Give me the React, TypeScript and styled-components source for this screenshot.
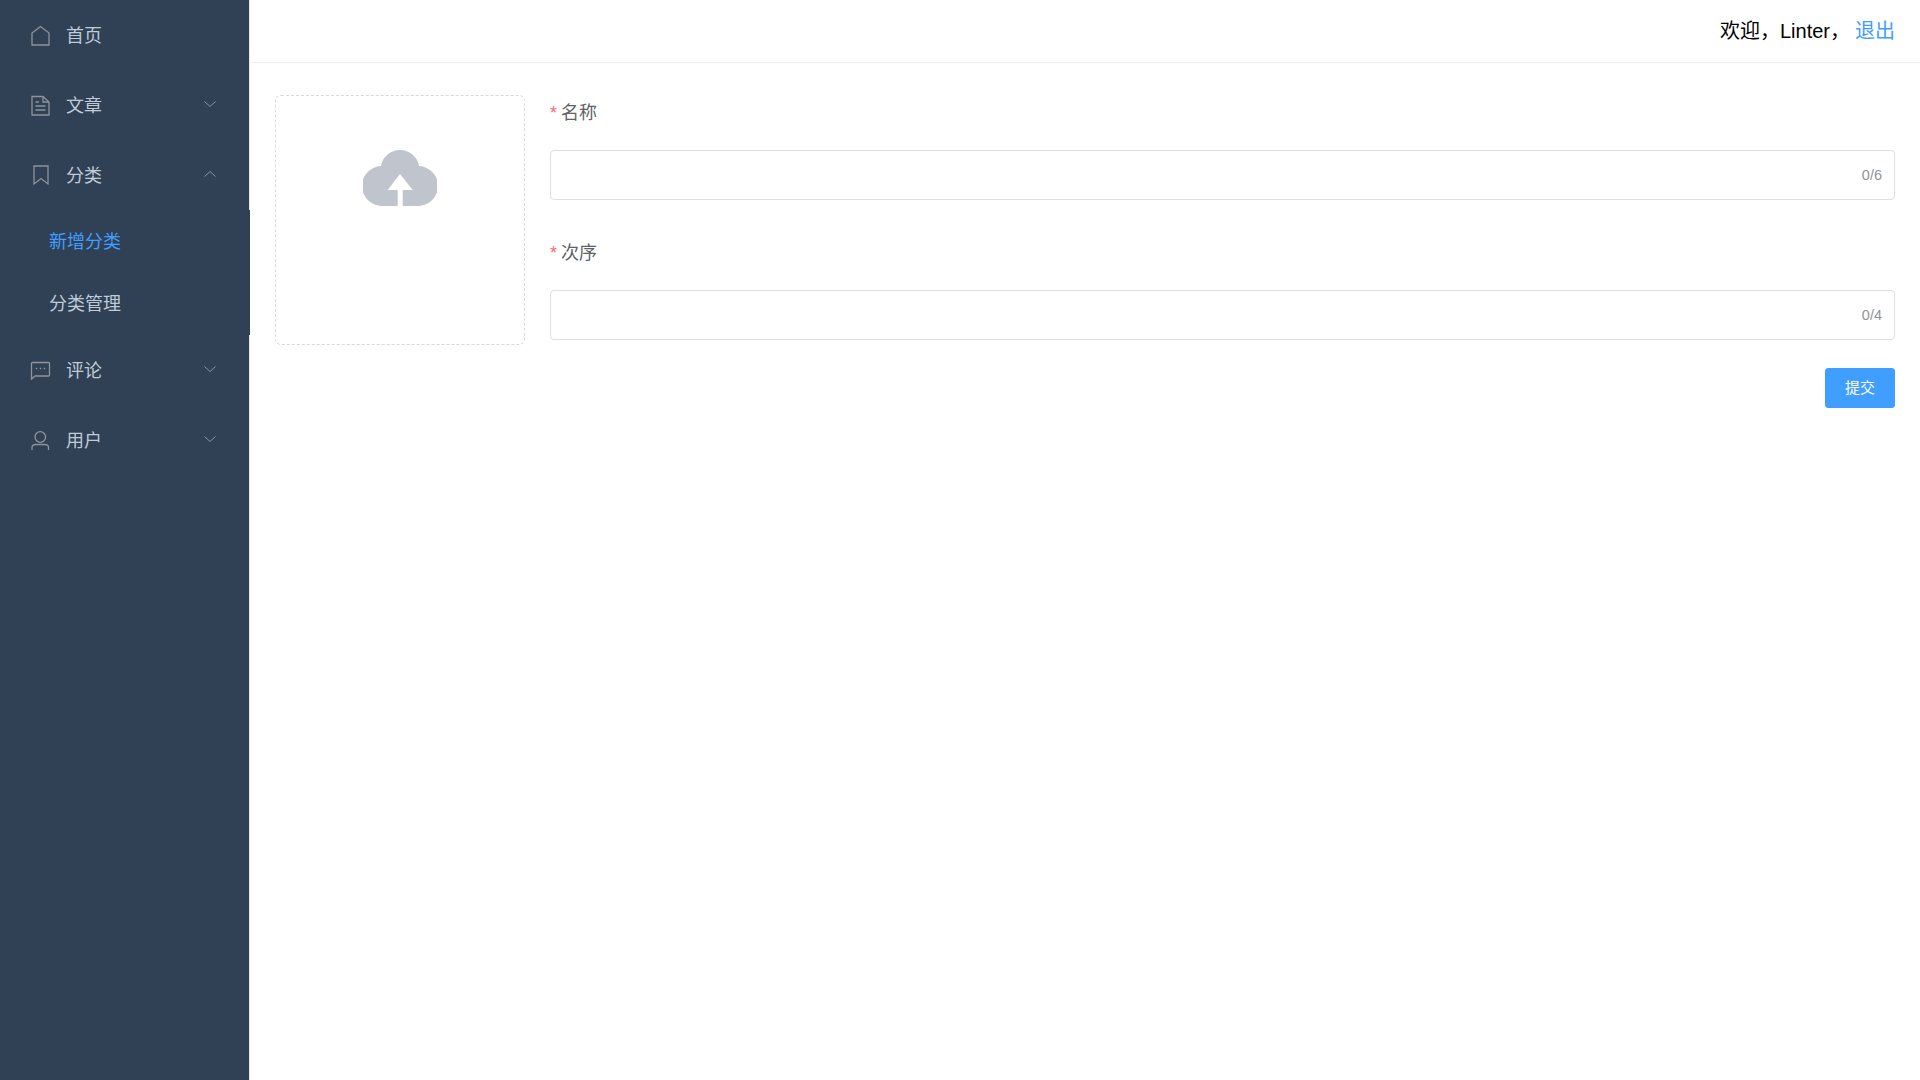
import React from 'react';
import styled, { createGlobalStyle } from 'styled-components';

const GlobalStyle = createGlobalStyle`
  html, body {
    margin: 0;
    height: 100%;
    background: #fff;
    font-family: "Liberation Sans", "Noto Sans CJK SC", sans-serif;
  }
  #root { height: 100%; }
  * { box-sizing: border-box; }
`;

const Layout = styled.div`
  display: flex;
  height: 100vh;
  overflow: hidden;
`;

const Sidebar = styled.aside`
  width: 250px;
  flex: none;
  background: #304156;
  border-right: 1px solid #e6e6e6;
`;

const MenuItem = styled.div`
  height: 70px;
  padding: 0 33px 2px 30px;
  display: flex;
  align-items: center;
  font-size: 18px;
  color: #bfcbd9;
`;

const MenuIcon = styled.svg`
  width: 20px;
  height: 20px;
  margin: 4px 16px 0 0;
  flex: none;
  overflow: visible;
  fill: none;
  stroke: #909399;
  stroke-width: 1.3;
`;

const MenuLabel = styled.span`
  flex: 1;
`;

const Arrow = styled.svg`
  width: 12px;
  height: 12px;
  fill: none;
  stroke: #909399;
  stroke-width: 1;
`;

// the open submenu covers the sidebar's right border
const SubMenu = styled.div`
  margin-right: -1px;
  background: #304156;
  position: relative;
`;

const SubItem = styled.div<{ $active?: boolean }>`
  height: 62.5px;
  padding: 0 0 3px 49px;
  display: flex;
  align-items: center;
  font-size: 18px;
  color: ${({ $active }) => ($active ? '#409eff' : '#bfcbd9')};
`;

const Main = styled.main`
  flex: 1;
  min-width: 0;
  display: flex;
  flex-direction: column;
`;

const Header = styled.header`
  height: 63px;
  flex: none;
  padding: 0 25px 3px 0;
  border-bottom: 1px solid #ebeef5;
  display: flex;
  align-items: center;
  justify-content: flex-end;
  font-size: 20px;
  color: #000;
`;

const LogoutLink = styled.a`
  color: #409eff;
  margin-left: 5px;
`;

const Content = styled.div`
  padding: 32px 25px 0;
  display: flex;
  align-items: flex-start;
  gap: 25px;
`;

const Uploader = styled.div`
  width: 250px;
  height: 250px;
  flex: none;
  border: 1px dashed #d9d9d9;
  border-radius: 6px;
  display: flex;
  justify-content: center;
  align-items: flex-start;
  padding-top: 54px;
`;

const CloudIcon = styled.svg`
  width: 74px;
  height: 56px;
  fill: #c0c4cc;
`;

const Form = styled.form`
  flex: 1;
  min-width: 0;
`;

const Field = styled.div`
  & + & {
    margin-top: 35px;
  }
`;

const FieldLabel = styled.label`
  display: block;
  height: 55px;
  line-height: 36px;
  font-size: 18px;
  color: #606266;
`;

const Required = styled.span`
  color: #f56c6c;
  margin-right: 4px;
`;

const InputBox = styled.div`
  height: 50px;
  border: 1px solid #dcdfe6;
  border-radius: 4px;
  padding: 0 12px;
  display: flex;
  align-items: center;
  justify-content: flex-end;
`;

const Counter = styled.span`
  font-size: 14.5px;
  color: #909399;
`;

const Actions = styled.div`
  display: flex;
  justify-content: flex-end;
  margin-top: 28px;
`;

const SubmitButton = styled.button`
  width: 70px;
  height: 40px;
  border: 1px solid #409eff;
  border-radius: 3px;
  background: #409eff;
  color: #fff;
  font-family: inherit;
  font-size: 15px;
  padding: 0 0 3px;
`;

const ChevronDown = () => (
  <Arrow viewBox="0 0 12 12">
    <path d="M0.5 3.5 L6 8.5 L11.5 3.5" />
  </Arrow>
);

const ChevronUp = () => (
  <Arrow viewBox="0 0 12 12">
    <path d="M0.5 8.5 L6 3.5 L11.5 8.5" />
  </Arrow>
);

const CloudUpload = () => (
  <CloudIcon viewBox="0 0 74 56">
    <path d="M20 56 A20 20 0 0 1 18 16 A19.3 19.3 0 0 1 56 16 A20 20 0 0 1 54 56 L39.7 56 L39.7 40 L49.7 40 L37 24 L24.7 40 L34.7 40 L34.7 56 Z" />
  </CloudIcon>
);

const App = () => (
  <Layout>
    <GlobalStyle />
    <Sidebar>
      <MenuItem>
        <MenuIcon viewBox="0 0 20 20">
          <path d="M2 7 L10.5 0.5 L19 7 V19 H2 Z" />
        </MenuIcon>
        <MenuLabel>首页</MenuLabel>
      </MenuItem>
      <MenuItem>
        <MenuIcon viewBox="0 0 20 20">
          <path d="M2 0.5 H13 L19 6 V19 H2 Z M13 0.5 V6 H19 M5.5 6 H9 M5.5 10 H15.5 M5.5 14 H15.5" />
        </MenuIcon>
        <MenuLabel>文章</MenuLabel>
        <ChevronDown />
      </MenuItem>
      <MenuItem>
        <MenuIcon viewBox="0 0 20 20">
          <path d="M4 0 H18 V18 L11 12.5 L4 18 Z" />
        </MenuIcon>
        <MenuLabel>分类</MenuLabel>
        <ChevronUp />
      </MenuItem>
      <SubMenu>
        <SubItem $active>新增分类</SubItem>
        <SubItem>分类管理</SubItem>
      </SubMenu>
      <MenuItem>
        <MenuIcon viewBox="0 0 20 20">
          <path d="M1.5 2.5 Q1.5 1.5 2.5 1.5 H18.5 Q19.5 1.5 19.5 2.5 V14 Q19.5 15 18.5 15 H5 L1.5 18 Z M5.8 7.5 H7.2 M9.8 7.5 H11.2 M13.8 7.5 H15.2" />
        </MenuIcon>
        <MenuLabel>评论</MenuLabel>
        <ChevronDown />
      </MenuItem>
      <MenuItem>
        <MenuIcon viewBox="0 0 20 20">
          <path d="M10.3 0.7 A5.3 5.3 0 1 0 10.3 11.3 A5.3 5.3 0 1 0 10.3 0.7 M2 19 V16.5 C2 14.5 4 13.5 6 13.5 H14.5 C16.5 13.5 18.5 14.5 18.5 16.5 V19" />
        </MenuIcon>
        <MenuLabel>用户</MenuLabel>
        <ChevronDown />
      </MenuItem>
    </Sidebar>
    <Main>
      <Header>
        <span>欢迎，Linter，</span>
        <LogoutLink>退出</LogoutLink>
      </Header>
      <Content>
        <Uploader>
          <CloudUpload />
        </Uploader>
        <Form>
          <Field>
            <FieldLabel><Required>*</Required>名称</FieldLabel>
            <InputBox><Counter>0/6</Counter></InputBox>
          </Field>
          <Field>
            <FieldLabel><Required>*</Required>次序</FieldLabel>
            <InputBox><Counter>0/4</Counter></InputBox>
          </Field>
          <Actions>
            <SubmitButton type="button">提交</SubmitButton>
          </Actions>
        </Form>
      </Content>
    </Main>
  </Layout>
);

export default App;
